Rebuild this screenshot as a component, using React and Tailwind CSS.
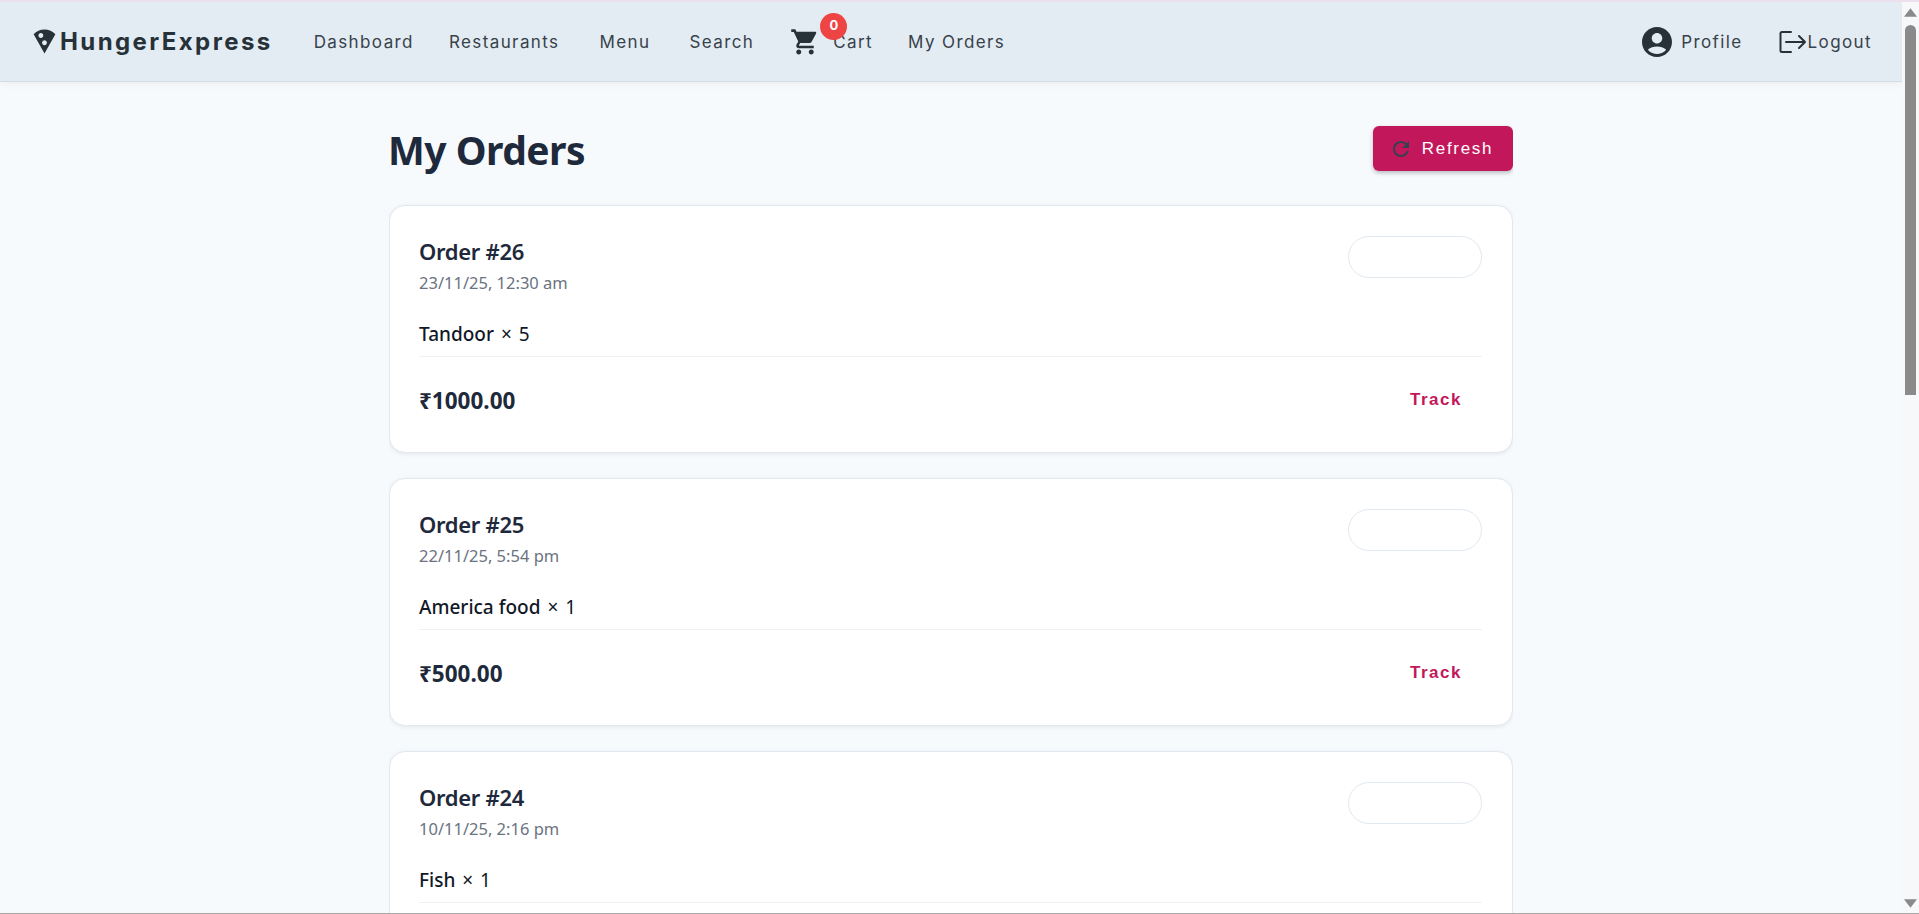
const Mui = ({ d, className }) => (
  <svg viewBox="0 0 24 24" fill="currentColor" className={className}><path d={d} /></svg>
);
const PIZZA = "M12 2C8.43 2 5.23 3.54 3.01 6L12 22l8.99-16C18.78 3.55 15.57 2 12 2zM7 7c0-1.1.9-2 2-2s2 .9 2 2-.9 2-2 2-2-.9-2-2zm5 8c-1.1 0-2-.9-2-2s.9-2 2-2 2 .9 2 2-.9 2-2 2z";
const CART = "M7 18c-1.1 0-1.99.9-1.99 2S5.9 22 7 22s2-.9 2-2-.9-2-2-2zM1 2v2h2l3.6 7.59-1.35 2.45c-.16.28-.25.61-.25.96 0 1.1.9 2 2 2h12v-2H7.42c-.14 0-.25-.11-.25-.25l.03-.12.9-1.83h7.45c.75 0 1.41-.41 1.75-1.03l3.58-6.49c.08-.14.12-.31.12-.48 0-.55-.45-1-1-1H5.21l-.94-2H1zm16 16c-1.1 0-1.99.9-1.99 2s.89 2 1.99 2 2-.9 2-2-.9-2-2-2z";
const ACCOUNT = "M12 2C6.48 2 2 6.48 2 12s4.48 10 10 10 10-4.48 10-10S17.52 2 12 2zm0 4c1.93 0 3.5 1.57 3.5 3.5S13.93 13 12 13s-3.5-1.57-3.5-3.5S10.07 6 12 6zm0 14c-2.03 0-4.43-.82-6.14-2.88C7.55 15.8 9.68 15 12 15s4.45.8 6.14 2.12C16.43 19.18 14.03 20 12 20z";
const REFRESH = "M17.65 6.35C16.2 4.9 14.21 4 12 4c-4.42 0-7.99 3.58-7.99 8s3.57 8 7.99 8c3.73 0 6.84-2.55 7.73-6h-2.08c-.82 2.33-3.04 4-5.65 4-3.31 0-6-2.69-6-6s2.69-6 6-6c1.66 0 3.14.69 4.22 1.78L13 11h7V4l-2.35 2.35z";

const orders = [
  { id: 26, date: "23/11/25, 12:30 am", item: "Tandoor", qty: 5, total: "₹1000.00" },
  { id: 25, date: "22/11/25, 5:54 pm", item: "America food", qty: 1, total: "₹500.00" },
  { id: 24, date: "10/11/25, 2:16 pm", item: "Fish", qty: 1 },
];

function OrderCard({ o }) {
  return (
    <div className="shrink-0 bg-white border border-[#e2e8f0] rounded-2xl shadow-[0_1px_4px_rgba(0,0,0,0.08)] pl-[29px] pr-[30px] pt-[30px] h-[248px]">
      <div className="flex justify-between items-start">
        <div>
          <div className="text-[22px] leading-[30px] tracking-[-0.3px] font-semibold text-[#1e293b]">Order #{o.id}</div>
          <div className="text-[16.5px] leading-[22px] mt-[6px] text-[#6b7280]">{o.date}</div>
        </div>
        <div className="w-[134px] h-[42px] rounded-full border border-[#e2e8f0] bg-white" />
      </div>
      <div className="mt-[27px] pb-[9px] border-b border-[#f1f1f3] text-[19px] leading-[26px] text-[#111827]">
        <span className="font-medium">{o.item}</span>
        <span className="[word-spacing:2px]"> × {o.qty}</span>
      </div>
      {o.total && (
        <div className="flex justify-between items-center mt-[29px]">
          <div className="text-[22.5px] leading-[30px] font-bold text-[#1e293b]">{o.total}</div>
          <button className="mr-[20px] mb-[2px] font-['Liberation_Sans',sans-serif] text-[17px] font-bold tracking-[1.5px] text-[#c2185b]">Track</button>
        </div>
      )}
    </div>
  );
}

function NavLink({ children, className }) {
  return <span className={"whitespace-nowrap mt-[2px] " + className}>{children}</span>;
}

export default function App() {
  return (
    <div className="h-[914px] overflow-hidden flex border-t-2 border-b border-t-[#ece0ee] border-b-[#a9a9a9] bg-[#f6fafd] font-['Noto_Sans',sans-serif]">
      <div className="w-[1902px] shrink-0 flex flex-col">
        <header className="h-[80px] shrink-0 flex items-center bg-[#e3ebf3] border-b border-[#d3dde6] shadow-[0_2px_8px_rgba(0,0,0,0.05)] pl-[31px] pr-[30px] text-[#37424a] font-['Inter',sans-serif] text-[17px] tracking-[1.4px]">
          <Mui d={PIZZA} className="w-[29px] h-[29px] -ml-[1px] text-[#263238]" />
          <span className="ml-[1px] text-[24px] font-bold tracking-[0.1em] text-[#263238]">HungerExpress</span>
          <NavLink className="ml-[41px]">Dashboard</NavLink>
          <NavLink className="ml-[35px]">Restaurants</NavLink>
          <NavLink className="ml-[40px]">Menu</NavLink>
          <NavLink className="ml-[39px]">Search</NavLink>
          <span className="relative ml-[36px] flex items-center">
            <Mui d={CART} className="w-[30px] h-[30px] text-[#263238]" />
            <NavLink className="ml-[13px]">Cart</NavLink>
            <span className="absolute left-[30px] -top-[14px] w-[27px] h-[27px] rounded-full bg-[#ef4444] text-white text-[13px] font-bold flex items-center justify-center tracking-normal">0</span>
          </span>
          <NavLink className="ml-[35px]">My Orders</NavLink>
          <div className="ml-auto flex items-center">
            <Mui d={ACCOUNT} className="w-[36px] h-[36px] text-[#263238]" />
            <NavLink className="ml-[6px]">Profile</NavLink>
            <svg viewBox="0 0 28 24" fill="none" stroke="#263238" strokeWidth="2" strokeLinecap="round" strokeLinejoin="round" className="ml-[36px] w-[28px] h-[24px]">
              <path d="M12 2H3a1.5 1.5 0 0 0-1.5 1.5v17A1.5 1.5 0 0 0 3 22h9" />
              <path d="M7 12h19M20 6l6 6-6 6" />
            </svg>
            <NavLink className="ml-[1px]">Logout</NavLink>
          </div>
        </header>
        <main className="flex-1 min-h-0 overflow-hidden w-[1124px] mx-auto pt-[44px]">
          <div className="flex justify-between items-center h-[45px] mb-[34px]">
            <h1 className="mt-[2px] -ml-[1px] text-[39px] font-bold tracking-[-0.5px] text-[#1e293b] leading-[50px]">My Orders</h1>
            <button className="w-[140px] h-[45px] pr-[4px] rounded-md bg-[#c2185b] shadow-[0_2px_4px_rgba(0,0,0,0.25)] flex items-center justify-center gap-[9px] font-['Liberation_Sans',sans-serif] text-[17px] font-medium tracking-[1.7px] text-white">
              <Mui d={REFRESH} className="w-[24px] h-[24px] text-[#37404f]" />
              Refresh
            </button>
          </div>
          <div className="flex flex-col gap-[25px]">
            {orders.map((o) => <OrderCard key={o.id} o={o} />)}
          </div>
        </main>
      </div>
      <div className="w-[17px] shrink-0 bg-[#f7f8f9] flex flex-col items-center">
        <svg viewBox="0 0 12 8" className="w-[13px] h-[9px] mt-[6px] shrink-0" fill="#8a8a8a"><path d="M6 0l6 8H0z" /></svg>
        <div className="w-[11px] h-[370px] mt-[8px] shrink-0 rounded-t-md bg-[#8a8a8a]" />
        <svg viewBox="0 0 12 8" className="w-[13px] h-[9px] mt-auto mb-[5px] shrink-0" fill="#8a8a8a"><path d="M6 8l6-8H0z" /></svg>
      </div>
    </div>
  );
}
